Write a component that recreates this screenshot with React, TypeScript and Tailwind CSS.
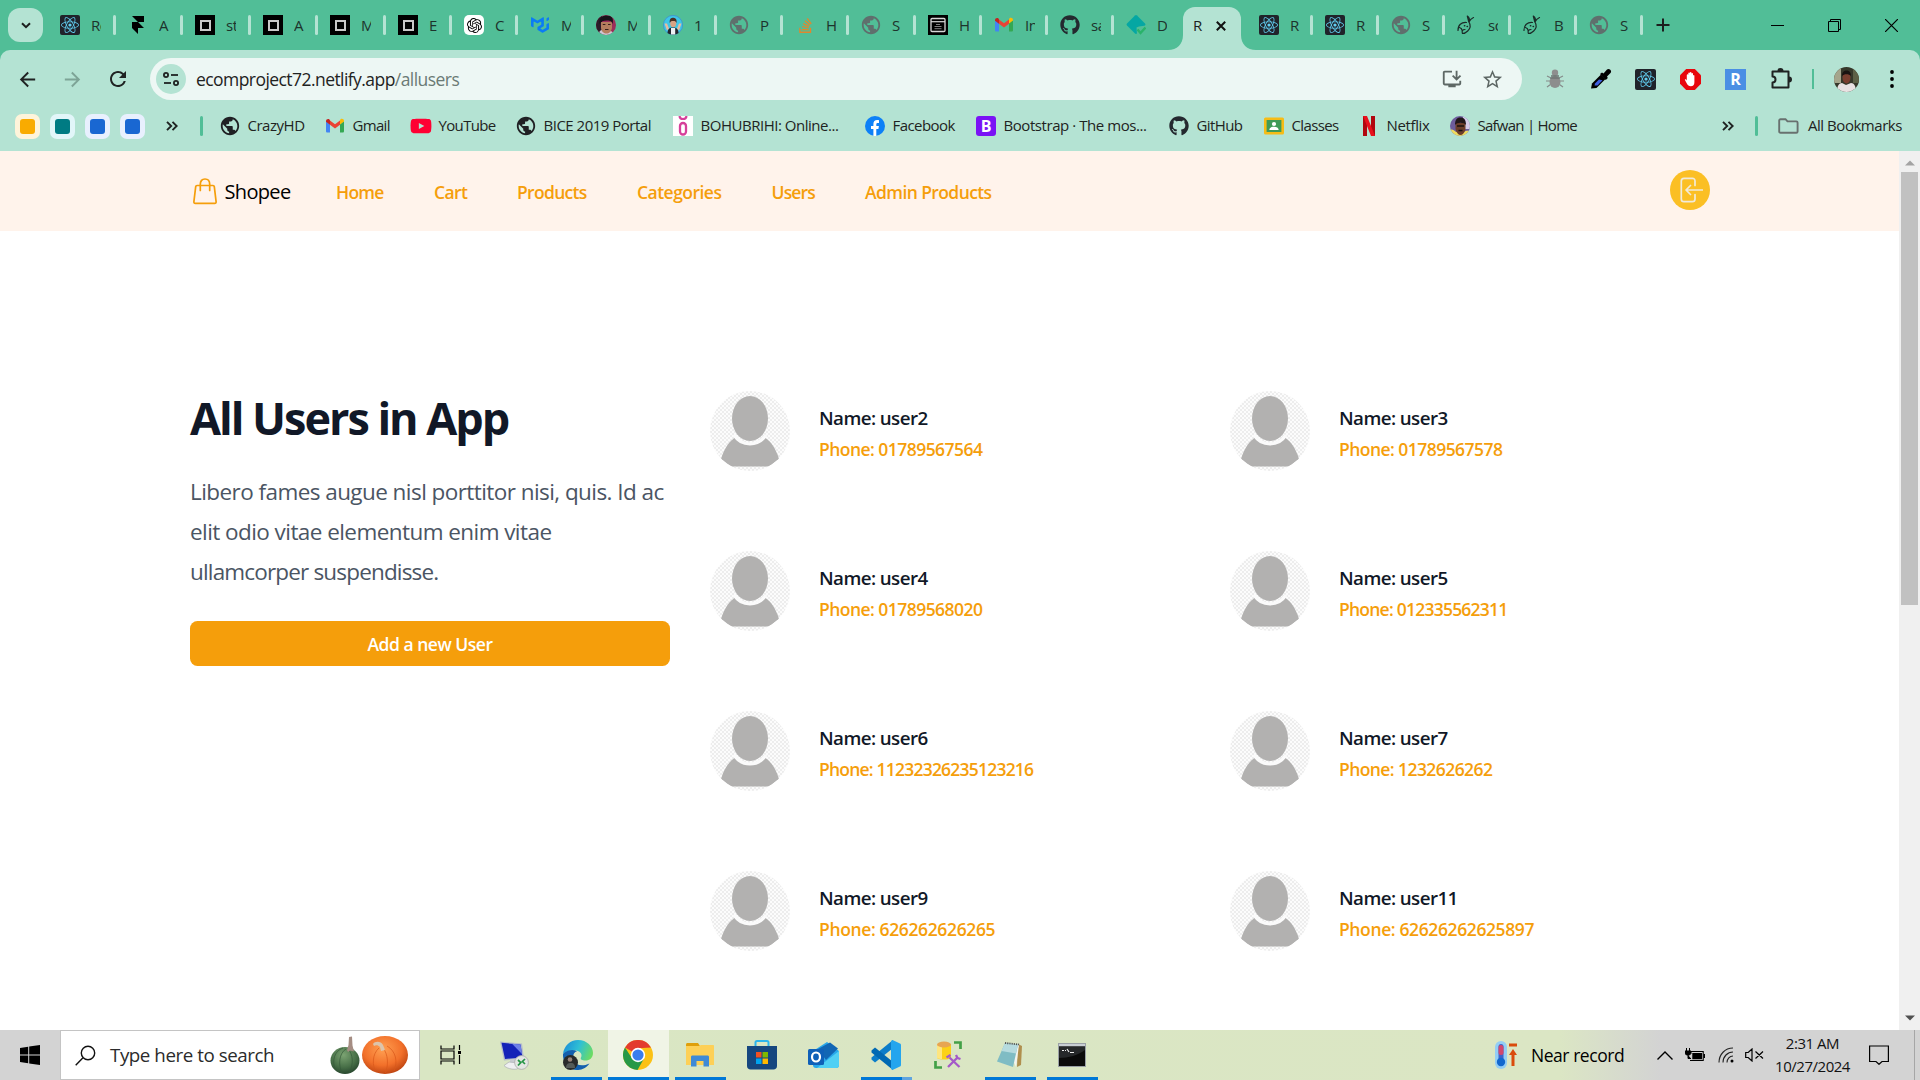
import React from 'react';
import { FaReact, FaGithub, FaStackOverflow, FaYoutube } from 'react-icons/fa';
import { SiFramer, SiOpenai, SiMui } from 'react-icons/si';
import {
  MdPublic, MdArrowBack, MdArrowForward, MdRefresh, MdStarBorder, MdInstallDesktop,
} from 'react-icons/md';

/* ---------- small brand icons ---------- */

const ReactTile = ({ className = 'size-5' }: { className?: string }) => (
  <span className={`${className} flex items-center justify-center rounded-[2px] bg-[#20232a] text-[#61cdf0]`}>
    <FaReact className="size-[18px]" />
  </span>
);

const SquareTile = () => (
  <span className="flex size-5 items-center justify-center bg-black">
    <span className="size-[11px] border-2 border-[#c9c9c9] bg-black" />
  </span>
);

const GmailIcon = () => (
  <svg viewBox="0 0 20 20" className="size-5">
    <path d="M1 5v10.2c0 .8.6 1.3 1.3 1.3H5V8.2z" fill="#4285f4" />
    <path d="M19 5v10.2c0 .8-.6 1.3-1.3 1.3H15V8.2z" fill="#34a853" />
    <path d="M15 4.6v4l4-3V5c0-2-2.2-2.800-3.500-1.700z" fill="#fbbc04" />
    <path d="M5 8.800V4.500l5 3.800 5-3.800v4.300l-5 3.800z" fill="#ea4335" />
    <path d="M1 5v.8l4 3v-4.200l-.5-1.200C3.100 2.300 1 3.100 1 5z" fill="#c5221f" />
  </svg>
);

const GlobeGray = () => <MdPublic className="size-[22px] -m-px shrink-0 text-[#5f6f6d]" />;
const GlobeDark = () => <MdPublic className="size-[22px] -m-px shrink-0 text-[#202124]" />;

const FacePortrait = () => (
  <svg viewBox="0 0 20 20" className="size-5 rounded-full">
    <rect width="20" height="20" fill="#9c2c5a" />
    <path d="M0 0h6v20H0z" fill="#2c1a28" />
    <path d="M2 20c1-4 3-5 4-5l8 1c2 0 3 1 4 4z" fill="#cfc6d4" />
    <path d="M5 7h11v6c-1 4-3 5.500-5.500 5.500S5.500 17 5 13z" fill="#b57e5e" />
    <path d="M3.500 9C3 3 6 .6 11 .6S18 4 16.500 9c-.8-2.500-1.500-3.500-5.500-3.500S5 6.500 3.500 9z" fill="#17121a" />
    <path d="M6.800 9.500h2.600M12 9.500h2.600M9 14.500h3.500" stroke="#3a211c" strokeWidth="1.100" />
  </svg>
);

const Memoji = () => (
  <svg viewBox="0 0 20 20" className="size-5">
    <circle cx="10" cy="10" r="9.600" fill="#3ec6e8" stroke="#3f8fd0" strokeWidth=".8" />
    <path d="M4.500 18c.2-4 2-5.500 5.500-5.500s5.300 1.500 5.500 5.500c-3 2-8 2-11 0z" fill="#23262d" />
    <path d="M8 13h4.200v6.500H8z" fill="#eef1f5" />
    <path d="M1.500 8.500l2.500 0 2 5-2 2zM18.500 8.500l-2.500 0-2 5 2 2z" fill="#e8bba0" />
    <ellipse cx="10.200" cy="8.500" rx="3" ry="3.700" fill="#d9a384" />
    <path d="M6.800 8C6.200 4 8 2.800 10.500 2.800S14 5 13.500 8c-.8-1.800-1.500-2-3.200-2S7.500 6.200 6.800 8z" fill="#4b3024" />
  </svg>
);

const BrowserTile = () => (
  <svg viewBox="0 0 20 20" className="size-5">
    <rect width="20" height="20" fill="#000" />
    <rect x="3" y="3.500" width="14" height="13" rx="1" fill="none" stroke="#d6d6d6" strokeWidth="1.300" />
    <path d="M3 6.700h14" stroke="#d6d6d6" strokeWidth="1.200" />
    <path d="M8 9.500h4M6.500 11.500h7M6.500 13.700h7" stroke="#8d8d8d" strokeWidth=".9" />
  </svg>
);

const DiamondCheck = () => (
  <svg viewBox="0 0 20 20" className="size-5">
    <path d="M9 .5a1.500 1.500 0 0 1 2 0l8 8a1.500 1.500 0 0 1 0 2l-8 8a1.500 1.500 0 0 1-2 0l-8-8a1.500 1.500 0 0 1 0-2z" fill="#05a7a3" />
    <path d="M10.500 12.500l2.500-1 7-1v9.500h-9z" fill="#51be97" />
    <path d="M11.500 14.500l3 3.500 5-5.500" fill="none" stroke="#29b36a" strokeWidth="2.400" />
  </svg>
);

const Rabbit = () => (
  <svg viewBox="0 0 20 20" className="size-5" fill="none" stroke="#1b2b28" strokeWidth="1.200" strokeLinecap="round" strokeLinejoin="round">
    <path d="M11.800 7L10.300 1C12 2 12.800 4.500 12 7zM12 7c1-2.500 2.500-3.700 4.500-4.500M12 7c1.800 3 1.300 6.500-1.300 9-1.500 1.500-3.500 2.500-5.200 2.500" />
    <path d="M1 15.500C.8 10 4.500 7 9.500 7.500M5.500 18.500c-1-2.500 0-4 2.500-4M2.500 12.500c1.500.5 2.500 1.500 2.500 2.700" />
    <path d="M7.500 10.800h.2M10.200 11.500h.2" strokeWidth="1.600" />
  </svg>
);

const YouTubeIcon = () => <FaYoutube className="size-[22px] shrink-0 text-[#ff0033]" />;

const BohubrihiIcon = () => (
  <svg viewBox="0 0 20 20" className="size-5">
    <rect width="20" height="20" fill="#fff" />
    <rect x="7" y="7" width="6" height="11.500" rx="3" fill="none" stroke="#d6409a" strokeWidth="2.300" />
    <path d="M6.500 0c.5 4 6.500 4 7 0" fill="none" stroke="#d6409a" strokeWidth="2.200" />
  </svg>
);

const FacebookIcon = () => (
  <svg viewBox="0 0 20 20" className="size-5">
    <circle cx="10" cy="10" r="10" fill="#0d80f7" />
    <path d="M8.400 20v-7H6v-3h2.400V8c0-2.600 1.400-4 3.700-4 .8 0 1.500.1 1.900.2V7h-1.300c-1.100 0-1.400.6-1.400 1.400V10h2.600l-.5 3h-2.100v7z" fill="#fff" />
  </svg>
);

const BootstrapIcon = () => (
  <span className="flex size-5 items-center justify-center rounded-[3px] bg-[#7a12f5] text-[16px] leading-none font-bold text-white">B</span>
);

const ClassesIcon = () => (
  <svg viewBox="0 0 20 20" className="size-5">
    <rect y="1.500" width="20" height="17" rx="1.500" fill="#f6bc16" />
    <rect x="2.600" y="4" width="14.800" height="12" fill="#3f9a57" />
    <circle cx="10" cy="8" r="2.100" fill="#fff" />
    <path d="M5.300 14c.3-2.400 2-3.200 4.700-3.200s4.400.8 4.700 3.200z" fill="#fff" />
  </svg>
);

const NetflixIcon = () => (
  <svg viewBox="0 0 20 20" className="size-5">
    <path d="M4 0h4v20H4z" fill="#b1060f" />
    <path d="M12 0h4v20h-4z" fill="#b1060f" />
    <path d="M4 0h4l8 20h-4z" fill="#e9101c" />
  </svg>
);

const SafwanIcon = () => (
  <svg viewBox="0 0 20 20" className="size-5 rounded-full">
    <rect width="20" height="20" fill="#6d5c9c" />
    <path d="M13 0h7v13h-7z" fill="#d6cdea" />
    <path d="M0 20v-6c2-1 4 0 6 2h8c3-2 5-1 6 0v4z" fill="#f0dc5e" />
    <path d="M5.500 7h10v6c-1 4-3 6-5 6s-4-2-5-6z" fill="#6b3d2b" />
    <path d="M5 9C5 3 7.500 1.500 10.500 1.500S16 3 16 9c-2-3-9-3-11 0z" fill="#201619" />
    <path d="M7 10h7M8.500 14.500h4" stroke="#1a1211" strokeWidth="1.300" />
  </svg>
);

/* ---------- browser chrome ---------- */

type Tab = { w: string; t: string; icon?: React.ReactNode; noSep?: boolean };

const leftTabs: Tab[] = [
  { w: 'w-[68px]', t: 'Re', icon: <ReactTile /> },
  { w: 'w-[67px]', t: 'A', icon: <SiFramer className="h-[20px] w-[18px] text-black" /> },
  { w: 'w-[68px]', t: 'sta', icon: <SquareTile /> },
  { w: 'w-[67px]', t: 'A', icon: <SquareTile /> },
  { w: 'w-[68px]', t: 'M', icon: <SquareTile /> },
  { w: 'w-[66px]', t: 'E', icon: <SquareTile /> },
  { w: 'w-[66px]', t: 'C', icon: <span className="flex size-5 items-center justify-center rounded-[5px] bg-white"><SiOpenai className="size-[15px] text-black" /></span> },
  { w: 'w-[66px]', t: 'M', icon: <SiMui className="size-[18px] text-[#0a7cf5]" /> },
  { w: 'w-[67px]', t: 'M', icon: <FacePortrait /> },
  { w: 'w-[66px]', t: '1', icon: <Memoji /> },
  { w: 'w-[66px]', t: 'P', icon: <GlobeGray /> },
  { w: 'w-[66px]', t: 'H', icon: <FaStackOverflow className="size-[17px] text-[#e0872e]" /> },
  { w: 'w-[67px]', t: 'S', icon: <GlobeGray /> },
  { w: 'w-[66px]', t: 'H', icon: <BrowserTile /> },
  { w: 'w-[66px]', t: 'In', icon: <GmailIcon /> },
  { w: 'w-[66px]', t: 'sa', icon: <FaGithub className="size-5 text-[#24292f]" /> },
  { w: 'w-[72px]', t: 'D', icon: <DiamondCheck />, noSep: true },
];

const rightTabs: Tab[] = [
  { w: 'w-[66px]', t: 'R', icon: <ReactTile /> },
  { w: 'w-[66px]', t: 'R', icon: <ReactTile /> },
  { w: 'w-[66px]', t: 'S', icon: <GlobeGray /> },
  { w: 'w-[66px]', t: 'so', icon: <Rabbit /> },
  { w: 'w-[66px]', t: 'B', icon: <Rabbit /> },
  { w: 'w-[66px]', t: 'S', icon: <GlobeGray /> },
];

const TabItem = ({ tab }: { tab: Tab }) => (
  <div className={`${tab.w} relative flex h-full shrink-0 items-center pl-[15px]`}>
    <span className="flex w-5 shrink-0 items-center justify-center">{tab.icon}</span>
    <span className="ml-[11px] w-[10px] overflow-hidden text-[15px] leading-5 tracking-[-0.03em] whitespace-nowrap text-[#1d332c]">{tab.t}</span>
    {!tab.noSep && <span className="absolute -right-[3px] h-5 w-[3px] rounded-full bg-[#b4e3d3]" />}
  </div>
);

const TabStrip = () => (
  <div className="flex h-[50px] bg-[#51be97]">
    <div className="mt-2 ml-2 flex h-[34px] w-[35px] shrink-0 items-center justify-center rounded-xl bg-[#b4e3d3]">
      <svg viewBox="0 0 10 7" className="h-[7px] w-[10px]"><path d="M1 1.200l4 4 4-4" fill="none" stroke="#1c1f1e" strokeWidth="2" /></svg>
    </div>
    <div className="ml-[2px] flex h-[50px]">
      {leftTabs.map((t, i) => <TabItem key={i} tab={t} />)}
      <div className="relative mt-[7px] flex h-[43px] w-[58px] items-center rounded-t-xl bg-[#b4e3d3] pb-[6px] pl-[10px]">
        <svg viewBox="0 0 15 15" className="absolute bottom-0 -left-[15px] size-[15px]"><path d="M15 0v15H0C9 15 15 9 15 0z" fill="#b4e3d3" /></svg>
        <svg viewBox="0 0 15 15" className="absolute -right-[15px] bottom-0 size-[15px]"><path d="M0 0v15h15C6 15 0 9 0 0z" fill="#b4e3d3" /></svg>
        <span className="w-[10px] text-[15px] text-[#1c1f1e]">R</span>
        <svg viewBox="0 0 10 10" className="ml-[13px] size-[10px]"><path d="M.8.8l8.400 8.400M9.200.8L.8 9.200" stroke="#111" strokeWidth="2" /></svg>
      </div>
      <div className="ml-[3px] flex">{rightTabs.map((t, i) => <TabItem key={i} tab={t} />)}</div>
    </div>
    <svg viewBox="0 0 14 14" className="mt-[18px] ml-4 size-[14px]"><path d="M7 .5v13M.5 7h13" stroke="#1c1f1e" strokeWidth="2" /></svg>
    <div className="mr-[22px] ml-auto flex h-[50px] items-center gap-[44px]">
      <svg viewBox="0 0 13 13" className="size-[13px]"><path d="M0 6.500h13" stroke="#000" /></svg>
      <svg viewBox="0 0 13 13" className="size-[13px]" fill="none" stroke="#000"><path d="M.5 2.500h10v10H.5zM2.500 2.500v-2h10v10h-2" /></svg>
      <svg viewBox="0 0 13 13" className="size-[13px]"><path d="M0 0l13 13M13 0L0 13" stroke="#000" strokeWidth="1.200" /></svg>
    </div>
  </div>
);

const Toolbar = () => (
  <div className="flex h-[58px] items-center text-[#1f2322]">
    <MdArrowBack className="ml-[16px] size-[23px]" />
    <MdArrowForward className="ml-[22px] size-[23px] text-[#7da496]" />
    <MdRefresh className="ml-[22px] size-[24px]" />
    <div className="ml-[20px] flex h-[42px] w-[1372px] items-center rounded-full bg-[#edf7f4]">
      <span className="ml-[6px] flex size-[30px] items-center justify-center rounded-full bg-[#b4e3d3]">
        <svg viewBox="0 0 16 14" className="h-[14px] w-4" fill="none" stroke="#1f2322" strokeWidth="1.800">
          <circle cx="3" cy="3" r="2.100" /><path d="M8 3h7" /><circle cx="13" cy="11" r="2.100" /><path d="M1 11h7" />
        </svg>
      </span>
      <span className="ml-[10px] text-[17.5px] tracking-[-0.032em] text-[#1f2322]">ecomproject72.netlify.app<span className="text-[#6a7a75]">/allusers</span></span>
      <MdInstallDesktop className="mr-[18px] ml-auto size-[22px] text-[#5d6764]" />
      <MdStarBorder className="mr-[18px] size-[23px] text-[#5d6764]" />
    </div>
    <svg viewBox="0 0 20 20" className="ml-[23px] size-5">
      <path d="M2 7l3 1.500M18 7l-3 1.500M1 12h4M19 12h-4M2 18l3.500-2.500M18 18l-3.500-2.500" stroke="#858b8a" strokeWidth="1.200" />
      <circle cx="10" cy="3.800" r="3.200" fill="#8e8e8e" />
      <ellipse cx="10" cy="13" rx="5.500" ry="6" fill="#8d8d8d" />
      <path d="M5 9h10M6 7h8" stroke="#6f7473" strokeWidth="1.300" />
    </svg>
    <svg viewBox="0 0 22 22" className="ml-[25px] size-[22px]">
      <path d="M1 20.500l1-5L11 6.500l4.500 4.500-9 9z" fill="#000" />
      <path d="M4.500 17.500l.5-2 4-4 3.500.8-5 5.200z" fill="#3f5fe0" />
      <path d="M10 6l2-1.500 1.500 1L17 1.500c2-1.800 5.500 1 3.500 3.500L17 8.500l.8 1.500-2 2z" fill="#000" />
    </svg>
    <ReactTile className="ml-[23px] size-[21px]" />
    <svg viewBox="0 0 21 21" className="ml-[24px] size-[21px]">
      <path d="M6.200 0h8.600L21 6.200v8.600L14.800 21H6.200L0 14.800V6.200z" fill="#e8060c" />
      <path d="M6.800 14.500l-2-3.800c.6-.8 1.400-.3 2 .7V6c0-1 1.500-1 1.500 0V4.300c0-1.100 1.600-1.100 1.600 0v-.6c0-1.100 1.600-1.100 1.600 0v1c0-1 1.500-1 1.500 0v2c0-.9 1.400-.9 1.400 0v6.500c0 2.600-1.200 4-3.600 4-2 0-3-.8-4-2.700z" fill="#fff" />
    </svg>
    <span className="ml-[24px] flex size-[21px] items-center justify-center bg-[#4a8fe4] text-[16px] leading-none font-bold text-white">R</span>
    <svg viewBox="0 0 22 22" className="ml-[24px] size-[22px]">
      <path d="M2.500 3.500h16v16h-16v-5a3 3 0 0 0 0-6z" fill="none" stroke="#1f2322" strokeWidth="2" strokeLinejoin="round" />
      <path d="M7.500 3a3 3 0 0 1 6 0zM19 8.500a3 3 0 0 1 0 6z" fill="#1f2322" />
    </svg>
    <span className="ml-[20px] h-[20px] w-[2px] bg-[#51be97]" />
    <svg viewBox="0 0 25 25" className="ml-[20px] size-[25px] rounded-full">
      <rect width="25" height="25" fill="#36382a" />
      <path d="M0 0h7v16H0z" fill="#a5a58c" /><path d="M19 2h6v14h-6z" fill="#5d6146" />
      <path d="M3 25c0-6 2-9 5-9l4 2 5-2c3 0 5 3 5 9z" fill="#e9e2e2" />
      <ellipse cx="12.500" cy="10.500" rx="4" ry="6" fill="#7a3f2f" />
      <path d="M8 9c0-4 2-5.500 4.500-5.500S17 5 17 9c-2-2.500-7-2.500-9 0z" fill="#1a1411" />
    </svg>
    <svg viewBox="0 0 4 18" className="ml-[31px] h-[18px] w-1"><circle cx="2" cy="2" r="1.900" /><circle cx="2" cy="9" r="1.900" /><circle cx="2" cy="16" r="1.900" /></svg>
  </div>
);

const Chevrons = () => (
  <svg viewBox="0 0 12 10" className="h-[10px] w-3" fill="none" stroke="#1f2322" strokeWidth="1.900"><path d="M1 .8L5.200 5 1 9.200M6.500.8L10.700 5 6.500 9.200" /></svg>
);

const bookmarks: { w: string; t: string; tr: string; icon: React.ReactNode }[] = [
  { w: 'w-[105px]', t: 'CrazyHD', tr: 'tracking-[-0.032em]', icon: <GlobeDark /> },
  { w: 'w-[86px]', t: 'Gmail', tr: 'tracking-[-0.045em]', icon: <GmailIcon /> },
  { w: 'w-[105px]', t: 'YouTube', tr: 'tracking-[-0.044em]', icon: <YouTubeIcon /> },
  { w: 'w-[157px]', t: 'BICE 2019 Portal', tr: 'tracking-[-0.033em]', icon: <GlobeDark /> },
  { w: 'w-[192px]', t: 'BOHUBRIHI: Online...', tr: 'tracking-[-0.032em]', icon: <BohubrihiIcon /> },
  { w: 'w-[111px]', t: 'Facebook', tr: 'tracking-[-0.037em]', icon: <FacebookIcon /> },
  { w: 'w-[193px]', t: 'Bootstrap · The mos...', tr: 'tracking-[-0.029em]', icon: <BootstrapIcon /> },
  { w: 'w-[95px]', t: 'GitHub', tr: 'tracking-[-0.039em]', icon: <FaGithub className="size-5 text-[#24292f]" /> },
  { w: 'w-[95px]', t: 'Classes', tr: 'tracking-[-0.042em]', icon: <ClassesIcon /> },
  { w: 'w-[91px]', t: 'Netflix', tr: 'tracking-[-0.024em]', icon: <NetflixIcon /> },
  { w: 'w-[130px]', t: 'Safwan | Home', tr: 'tracking-[-0.05em]', icon: <SafwanIcon /> },
];

const BookmarkBar = () => (
  <div className="flex h-[43px] items-center pb-[7px] text-[15px] text-[#1f2322]">
    <div className="ml-[15px] flex gap-[10px]">
      <span className="flex size-[25px] items-center justify-center rounded-[7px] bg-[#fef4da]"><span className="size-[15px] rounded-[3px] bg-[#f9ab00]" /></span>
      <span className="flex size-[25px] items-center justify-center rounded-[7px] bg-[#e2f6f9]"><span className="size-[15px] rounded-[3px] bg-[#007b83]" /></span>
      <span className="flex size-[25px] items-center justify-center rounded-[7px] bg-[#e8f0fe]"><span className="size-[15px] rounded-[3px] bg-[#1967d2]" /></span>
      <span className="flex size-[25px] items-center justify-center rounded-[7px] bg-[#e8f0fe]"><span className="size-[15px] rounded-[3px] bg-[#1967d2]" /></span>
    </div>
    <div className="ml-[21px]"><Chevrons /></div>
    <span className="ml-[22px] h-[20px] w-[3px] rounded-full bg-[#51be97]" />
    <div className="ml-[17px] flex">
      {bookmarks.map((b) => (
        <div key={b.t} className={`${b.w} flex shrink-0 items-center gap-[7.5px]`}>
          <span className="flex size-5 shrink-0 items-center justify-center">{b.icon}</span>
          <span className={`${b.tr} -mt-[2px] whitespace-nowrap`}>{b.t}</span>
        </div>
      ))}
    </div>
    <div className="mr-[21px] ml-auto"><Chevrons /></div>
    <span className="mr-[20px] h-[20px] w-[3px] rounded-full bg-[#51be97]" />
    <svg viewBox="0 0 21 16" className="h-4 w-[21px]"><path d="M1.200 2.500c0-.8.5-1.300 1.300-1.300h5l2 2.200h8.800c.8 0 1.300.5 1.300 1.300v8.800c0 .8-.5 1.300-1.300 1.300H2.500c-.8 0-1.300-.5-1.300-1.300z" fill="none" stroke="#68716f" strokeWidth="1.900" /></svg>
    <span className="-mt-[2px] mr-[18px] ml-[9px] w-[94px] tracking-[-0.031em] whitespace-nowrap">All Bookmarks</span>
  </div>
);

/* ---------- page ---------- */

const links = [
  { t: 'Home', c: 'w-[98px] tracking-[-0.043em]' },
  { t: 'Cart', c: 'w-[83px] tracking-[-0.034em]' },
  { t: 'Products', c: 'w-[120px] tracking-[-0.039em]' },
  { t: 'Categories', c: 'w-[134.500px] tracking-[-0.03em]' },
  { t: 'Users', c: 'w-[93.500px] tracking-[-0.048em]' },
  { t: 'Admin Products', c: 'w-[140px] tracking-[-0.034em]' },
];

const Navbar = () => (
  <nav className="flex h-20 bg-[#fff3eb]">
    <svg viewBox="0 0 24 27" className="mt-[27px] ml-[193px] h-[27px] w-6" fill="none" stroke="#f59e0b" strokeWidth="1.700" strokeLinecap="round" strokeLinejoin="round">
      <path d="M4 7.500h16c.8 0 1.200.4 1.300 1.200l1.800 15c.1 1-.4 1.700-1.400 1.700H2.300c-1 0-1.500-.7-1.400-1.700l1.800-15c.1-.8.5-1.200 1.300-1.200z" />
      <path d="M7.300 12.500V6.200C7.300 3 9.200 1 12 1s4.700 2 4.700 5.200v6.300" />
    </svg>
    <span className="mt-[26px] ml-[7.5px] w-[111.500px] text-[20px] leading-[30px] tracking-[-0.033em] text-black">Shopee</span>
    <div className="mt-[29px] flex text-[17.5px] leading-[25px] font-semibold whitespace-nowrap text-[#f59e0b]">
      {links.map((l) => <a key={l.t} className={l.c}>{l.t}</a>)}
    </div>
    <span className="mt-[19px] mr-[189px] ml-auto flex size-10 items-center justify-center rounded-full bg-[#fbbf24]">
      <svg viewBox="0 0 24 26" className="ml-[2px] h-[26px] w-6" fill="none" stroke="#f1ead9" strokeWidth="1.700" strokeLinecap="round" strokeLinejoin="round">
        <path d="M16 8.500V4c0-1.700-1-2.700-2.700-2.700H5C3.300 1.300 2.300 2.300 2.300 4v18c0 1.700 1 2.700 2.700 2.700h8.300c1.700 0 2.700-1 2.700-2.700v-4.500M23.500 13H7.500M11.500 8.500L7 13l4.500 4.500" />
      </svg>
    </span>
  </nav>
);

const Avatar = () => (
  <svg viewBox="0 0 80 80" className="size-20 shrink-0">
    <defs>
      <pattern id="checks" width="4" height="4" patternUnits="userSpaceOnUse">
        <rect width="4" height="4" fill="#fcfcfc" /><rect width="2" height="2" fill="#ededed" /><rect x="2" y="2" width="2" height="2" fill="#ededed" />
      </pattern>
      <clipPath id="round"><circle cx="40" cy="40" r="40" /></clipPath>
    </defs>
    <g clipPath="url(#round)">
      <rect width="80" height="80" fill="url(#checks)" />
      <path d="M11 68C14 58 19 50 26 46c8 10 20 10 28 0 7 4 12 12 15 22l-10 7.500H21z" fill="#b2b1b0" />
      <path d="M24 44c3 5 9 9 16 9s13-4 16-9" fill="none" stroke="#fbfbfb" strokeWidth="3" />
      <ellipse cx="40" cy="27.500" rx="18" ry="22.500" fill="#b2b1b0" />
    </g>
  </svg>
);

const users = [
  { n: 'user2', p: '01789567564', c: 'tracking-[-0.031em]' },
  { n: 'user3', p: '01789567578', c: 'tracking-[-0.031em]' },
  { n: 'user4', p: '01789568020', c: 'tracking-[-0.031em]' },
  { n: 'user5', p: '012335562311', c: 'tracking-[-0.044em]' },
  { n: 'user6', p: '11232326235123216', c: 'tracking-[-0.045em]' },
  { n: 'user7', p: '1232626262', c: 'tracking-[-0.033em]' },
  { n: 'user9', p: '626262626265', c: 'tracking-[-0.021em]' },
  { n: 'user11', p: '62626262625897', c: 'tracking-[-0.022em]' },
];

const Page = () => (
  <main className="flex-1 bg-white">
    <Navbar />
    <div className="flex pt-40 pl-[190px]">
      <section className="w-[480px] shrink-0">
        <h2 className="text-[45px] leading-[50px] font-bold tracking-[-0.045em] whitespace-nowrap text-[#111827] pt-[2px]">All Users in App</h2>
        <p className="mt-[29px] text-[22.5px] leading-10 whitespace-nowrap text-[#4b5563]">
          <span className="block tracking-[-0.025em]">Libero fames augue nisl porttitor nisi, quis. Id ac</span>
          <span className="block tracking-[-0.025em]">elit odio vitae elementum enim vitae</span>
          <span className="block tracking-[-0.037em]">ullamcorper suspendisse.</span>
        </p>
        <button className="mt-[29px] flex h-[45px] w-full items-center justify-center rounded-[7.500px] bg-[#f59e0b] pt-[2px] text-[17.5px] font-semibold tracking-[-0.028em] text-white">Add a new User</button>
      </section>
      <ul className="ml-10 grid grid-cols-[520px_520px] gap-y-20">
        {users.map((u) => (
          <li key={u.n} className="flex h-20 items-center gap-[29px]">
            <Avatar />
            <div className="pt-[4px] whitespace-nowrap">
              <h3 className="text-[18.75px] leading-8 font-semibold tracking-[-0.031em] text-[#111827]">Name: {u.n}</h3>
              <p className={`${u.c} text-[17.5px] leading-[30px] font-semibold text-[#f59e0b]`}>Phone: {u.p}</p>
            </div>
          </li>
        ))}
      </ul>
    </div>
  </main>
);

const Scrollbar = () => (
  <div className="flex w-[21px] flex-col items-center bg-[#f0f0f0]">
    <svg viewBox="0 0 10 6" className="mt-[9px] h-[6px] w-[10px]"><path d="M0 5.500L5 .5l5 5z" fill="#a3a3a3" /></svg>
    <span className="mt-[6px] h-[433px] w-[17px] bg-[#c1c1c1]" />
    <svg viewBox="0 0 10 6" className="mt-auto mb-[9px] h-[6px] w-[10px]"><path d="M0 .5L5 5.500l5-5z" fill="#505050" /></svg>
  </div>
);

/* ---------- taskbar ---------- */

const TaskItem = ({ w, bar, active, children }: { w: string; bar?: string; active?: boolean; children: React.ReactNode }) => (
  <div className={`${w} ${active ? 'bg-[#f0f4e6]' : ''} relative flex h-full shrink-0 items-center justify-center`}>
    {children}
    {bar && <span className={`${bar} absolute bottom-0 h-[3px] bg-[#0078d7]`} />}
  </div>
);

const PumpkinArt = () => (
  <svg viewBox="0 0 80 40" className="h-10 w-20">
    <defs>
      <radialGradient id="green" cx=".45" cy=".3" r=".75"><stop offset="0" stopColor="#7ba372" /><stop offset=".6" stopColor="#476f47" /><stop offset="1" stopColor="#23402a" /></radialGradient>
      <radialGradient id="orange" cx=".45" cy=".35" r=".7"><stop offset="0" stopColor="#ffa052" /><stop offset=".6" stopColor="#f2702a" /><stop offset="1" stopColor="#b53d0d" /></radialGradient>
    </defs>
    <ellipse cx="16" cy="25.500" rx="14.500" ry="13.500" fill="url(#green)" />
    <path d="M17 14c-7 4-8 16-4 24M19 14c5 5 6 15 1 24M14 13C5 16 3 26 6 34" fill="none" stroke="#35593a" strokeWidth=".7" />
    <path d="M18 15l1.500-5 .5-8 3-.5.5 9 1.500 6-4-1-2 1.500z" fill="#a58d83" />
    <ellipse cx="56" cy="20" rx="23" ry="19" fill="url(#orange)" />
    <path d="M50 13c-7 6-7 18-3 24M54 13c5 6 6 17 2 26M58 11c9 5 11 16 7 25" fill="none" stroke="#d9581a" strokeWidth=".7" />
    <path d="M44 9c2-3 8-3 10 1l2 5-4 1-1-4c-2-2-4-2-6-1z" fill="#dcc4ab" />
  </svg>
);

const Taskbar = () => (
  <div className="flex h-[50px] bg-[linear-gradient(90deg,#d3d3d3_0,#d3d3d3_60px,#d9e6c3_420px,#dbe6c4_1560px,#d3d3d3_1660px)] text-black">
    <div className="flex w-[60px] items-center justify-center">
      <svg viewBox="0 0 20 20" className="size-5"><path d="M0 3l8.200-1.200v7.700H0zM9.200 1.600L20 0v9.500H9.200zM0 10.500h8.200v7.700L0 17zM9.200 10.500H20V20L9.200 18.400z" /></svg>
    </div>
    <div className="flex w-[360px] items-center border border-[#c4c4c4] bg-white">
      <svg viewBox="0 0 21 21" className="ml-[14px] size-[21px]" fill="none" stroke="#111" strokeWidth="1.400"><circle cx="13" cy="8" r="6.700" /><path d="M8 12.800L.7 20.300" /></svg>
      <span className="ml-[14px] text-[18.75px] tracking-[-0.024em] whitespace-nowrap text-[#2b2b2b]">Type here to search</span>
      <div className="mr-[10px] ml-auto"><PumpkinArt /></div>
    </div>
    <TaskItem w="w-[60px]">
      <svg viewBox="0 0 21 20" className="h-5 w-[21px]" fill="none" stroke="#000" strokeWidth="1.200"><path d="M1 .5v3.500h13V.5M1 19.500V16h13v3.500M1 6h13v8H1zM19.500 0v5M19.500 10v9" /><path d="M18 6h3v3h-3z" fill="#000" stroke="none" /></svg>
    </TaskItem>
    <TaskItem w="w-[68px]">
      <svg viewBox="0 0 30 30" className="size-[30px]">
        <path d="M1 1.500L23 3.500l2 15L5 20.500z" fill="#b4bccb" /><path d="M2.500 2.800L21.500 4.500l2 13L6 19z" fill="#1322b8" /><path d="M13 3.700l8.500.8 1.500 9.500z" fill="#6d80e8" />
        <path d="M11 19.500l6-.5 2 5-8 0z" fill="#c9ccd2" /><path d="M5 25.500l5-3.500 10 1 2 3-4 3c-5 1-11-1-13-3.500z" fill="#eeeff1" stroke="#a9adb2" strokeWidth=".7" />
        <circle cx="22.500" cy="22.500" r="6.900" fill="#e3e6e3" stroke="#a9aaa9" strokeWidth=".8" />
        <path d="M19 20l2.800 2.500-2.800 3M26 19l-2.600 2.500 2.600 2.500" fill="none" stroke="#249545" strokeWidth="1.700" />
      </svg>
    </TaskItem>
    <TaskItem w="w-[60px]" bar="left-[3px] w-[51px]">
      <svg viewBox="0 0 30 30" className="mb-px size-[30px]">
        <defs><linearGradient id="edge" x1="0" y1=".3" x2="1" y2=".6"><stop offset="0" stopColor="#1b8fd8" /><stop offset=".5" stopColor="#2fc0d4" /><stop offset="1" stopColor="#6ddc62" /></linearGradient></defs>
        <path d="M0 14C1 6 7 0 15 0c9 0 15 6.500 15 13 0 5-3.500 7.500-7.500 7.500-3.500 0-5.500-1.300-4.500-3 .8-1.300 1-4.500-2-6-5-2.500-12-1-16 2.500z" fill="url(#edge)" />
        <path d="M0 14c4-4 10-5 14-2.700-4 1-5 6-3 10C13 25 19 27 26.500 23.500 23 29 17 30 14 30 6 29.500-.5 23 0 14z" fill="#1360ae" />
        <circle cx="7.500" cy="22.500" r="7.500" fill="#292b2b" /><circle cx="7" cy="19.500" r="2.300" fill="#99857b" /><path d="M3 28c0-4 2-5 5-5s4 2 4 5z" fill="#555b58" />
      </svg>
    </TaskItem>
    <TaskItem w="w-[61px]" active bar="left-0 w-[61px]">
      <svg viewBox="0 0 30 30" className="mr-px mb-px size-[30px]">
        <circle cx="15" cy="15" r="15" fill="#fbc116" />
        <path d="M15 15L2 7.500A15 15 0 0 1 28 7.500L15 8.300z" fill="#e33b2e" /><path d="M2 7.500A15 15 0 0 0 14.500 30L21 18.500 8.800 18z" fill="#279847" />
        <circle cx="15" cy="15" r="7.200" fill="#fff" /><circle cx="15" cy="15" r="5.600" fill="#3a7ded" />
      </svg>
    </TaskItem>
    <TaskItem w="w-[62px]" bar="left-[6px] w-[51px]">
      <svg viewBox="0 0 28 24" className="h-6 w-7">
        <path d="M0 1.500C0 .6.600 0 1.500 0H12l2 3H0z" fill="#df9f0b" /><path d="M0 3h13l2-1h12c.6 0 1 .4 1 1v19H0z" fill="#fdd057" />
        <path d="M5 23.500V14c0-1 .6-1.500 1.500-1.500h15c.9 0 1.500.5 1.500 1.500v9.500h-5.500V18h-7v5.500z" fill="#3f8ad6" />
      </svg>
    </TaskItem>
    <TaskItem w="w-[62px]">
      <svg viewBox="0 0 30 30" className="mr-px mb-px size-[30px]">
        <path d="M8.500 7V2.500C8.500 1.600 9 1 10 1h10c1 0 1.500.6 1.500 1.500V7" fill="none" stroke="#2db5ec" strokeWidth="2" /><path d="M0 6h30v20c0 2-1.500 3.500-3.500 3.500h-23C1.500 29.500 0 28 0 26z" fill="#16477f" />
        <path d="M9 12h5.500v5.500H9z" fill="#f25022" /><path d="M15.500 12H21v5.500h-5.500z" fill="#7fba00" /><path d="M9 18.500h5.500V24H9z" fill="#00a4ef" /><path d="M15.500 18.500H21V24h-5.500z" fill="#ffb900" />
      </svg>
    </TaskItem>
    <TaskItem w="w-[62px]">
      <svg viewBox="0 0 32 30" className="h-[30px] w-8">
        <path d="M5 11L19 2l12 9v14c0 2-1 3-3 3H8c-2 0-3-1-3-3z" fill="#28a8ea" /><path d="M10 9l12-6.500 8 6L18 20z" fill="#1166b4" /><path d="M31 11v14c0 2-1 3-3 3H9z" fill="#50d0f4" />
        <rect y="9" width="16" height="16" rx="1.500" fill="#0f60b8" /><ellipse cx="8" cy="17" rx="4" ry="4.500" fill="none" stroke="#fff" strokeWidth="2.200" />
      </svg>
    </TaskItem>
    <TaskItem w="w-[62px]" bar="left-[6px] w-[51px] border-r-[10px] border-[#5fa4df]">
      <svg viewBox="0 0 30 30" className="mb-px size-[30px]">
        <path d="M22 0l-.5 8.500L4 22.500l-3.500-3v-2z" fill="#0b7dc9" /><path d="M.5 12.500v-2L4 7.500l17.500 14L22 30z" fill="#0069b3" />
        <path d="M21.500 0L29 3.500c.7.300 1 .8 1 1.500v20c0 .7-.3 1.200-1 1.500L21.500 30l-1.500-1V1z" fill="#24a5ee" />
      </svg>
    </TaskItem>
    <TaskItem w="w-[62px]">
      <svg viewBox="0 0 28 28" className="size-7">
        <path d="M3 3h14v14c-3 2-11 2-14 0z" fill="#fcd116" /><path d="M3 3h5v15c-2 0-4-.4-5-1z" fill="#fee580" /><ellipse cx="10" cy="3.500" rx="7" ry="3" fill="#e7a552" />
        <path d="M20 1.500h6.500V8M1.500 20v6.500H8" fill="none" stroke="#43a047" strokeWidth="2.700" /><path d="M14 26l9.500-9.500M15.500 16.500l10 9.500M12.500 16.500l4-2.500M22 14l1.500 3 3 1" fill="none" stroke="#a45ac8" strokeWidth="2.300" />
      </svg>
    </TaskItem>
    <TaskItem w="w-[62px]" bar="left-[6px] w-[51px]">
      <svg viewBox="0 0 28 28" className="size-7">
        <path d="M22 3l4 2-1 19-4 2z" fill="#b08f4e" /><path d="M10 3l13 1-3 22z" fill="#f4f4ef" /><path d="M9 2l13 1.500-5 22.500L1 20.500z" fill="#7fbcc4" /><path d="M9 2l13 1.500-2 9L5.500 10z" fill="#b6dbdf" /><path d="M9 2l14 1.500" stroke="#555" strokeWidth="1.800" strokeDasharray="1.200 1" />
      </svg>
    </TaskItem>
    <TaskItem w="w-[62px]" bar="left-[6px] w-[51px]">
      <svg viewBox="0 0 28 24" className="h-6 w-7">
        <rect x=".5" y=".5" width="27" height="23" fill="#0b0b0b" stroke="#9aa0a6" /><rect x="1" y="1" width="26" height="2.500" fill="#c9ced4" /><path d="M1 15c9 0 20-3 26-8V3.500H1z" fill="#26282a" />
        <path d="M4 7.500h2M7 7.500h1M9 6l2 3M12 9.500h4" stroke="#eee" strokeWidth="1.200" />
      </svg>
    </TaskItem>
    <div className="ml-auto flex items-center">
      <svg viewBox="0 0 24 30" className="h-[30px] w-6">
        <rect x="1" y="1" width="12" height="28" rx="6" fill="#93cdf5" /><rect x="4.500" y="4" width="5" height="20" rx="2.500" fill="#3f62c8" /><rect x="4.500" y="5" width="5" height="10" rx="2.500" fill="#d1476e" /><circle cx="7" cy="22" r="4.200" fill="#1368ce" />
        <path d="M15 5h8M19 26V12" stroke="#da4b0c" strokeWidth="3" /><path d="M15 15l4-6 4 6z" fill="#da4b0c" />
      </svg>
      <span className="ml-[13px] w-[95px] text-[17.5px] tracking-[-0.026em] whitespace-nowrap">Near record</span>
      <svg viewBox="0 0 16 9" className="ml-[31px] h-[9px] w-4" fill="none" stroke="#000" strokeWidth="1.400"><path d="M.5 8.500L8 1l7.500 7.500" /></svg>
      <svg viewBox="0 0 20 14" className="ml-[12px] h-[14px] w-5"><path d="M6 3.500h12.200v9H5" fill="none" stroke="#000" strokeWidth="1.100" /><path d="M7.300 5h9.700v6.200H7.300zM18.500 6H20v4h-1.500z" /><path d="M1.500 0v3M4.500 0v3M0 3h6v2.500L4.500 7h-3L0 5.500zM3 7v3.500h3" fill="#000" stroke="#000" strokeWidth="1" /></svg>
      <svg viewBox="0 0 17 16" className="ml-[13px] h-4 w-[17px]" fill="none" stroke="#222" strokeWidth="1.100"><path d="M1 15.500C1 7.500 7 1 15 1M5 15.500C5 9.500 9.500 5 15 5M9 15.500C9 11.700 11.700 9 15 9" /><circle cx="14" cy="14" r="1.500" fill="#000" stroke="none" /></svg>
      <svg viewBox="0 0 19 14" className="ml-[10px] h-[14px] w-[19px]" fill="none" stroke="#000" strokeWidth="1.200"><path d="M.7 4.500h2.500L7 1v12L3.200 9.500H.7zM10.500 3.500l7.500 7M18 3.500l-7.500 7" /></svg>
      <div className="ml-[10px] w-[77px] text-center text-[15px] leading-[23px] tracking-[-0.031em] whitespace-nowrap text-[#111]"><div>2:31 AM</div><div>10/27/2024</div></div>
      <svg viewBox="0 0 20 20" className="ml-[18px] size-5" fill="none" stroke="#000" strokeWidth="1.200"><path d="M.6 1h18.800v15.500h-6.400L10 19.300 7 16.500H.6z" /></svg>
      <span className="ml-[25px] h-[50px] w-px bg-[#a6a6a6]" />
      <span className="w-[5px]" />
    </div>
  </div>
);

export default function App() {
  return (
    <div className="flex h-[1080px] w-[1920px] flex-col overflow-hidden font-['Open_Sans',sans-serif]">
      <TabStrip />
      <div className="bg-[#51be97]"><div className="h-[101px] rounded-t-[10px] bg-[#b4e3d3]">
        <Toolbar />
        <BookmarkBar />
      </div></div>
      <div className="flex h-[879px]"><Page /><Scrollbar /></div>
      <Taskbar />
    </div>
  );
}
